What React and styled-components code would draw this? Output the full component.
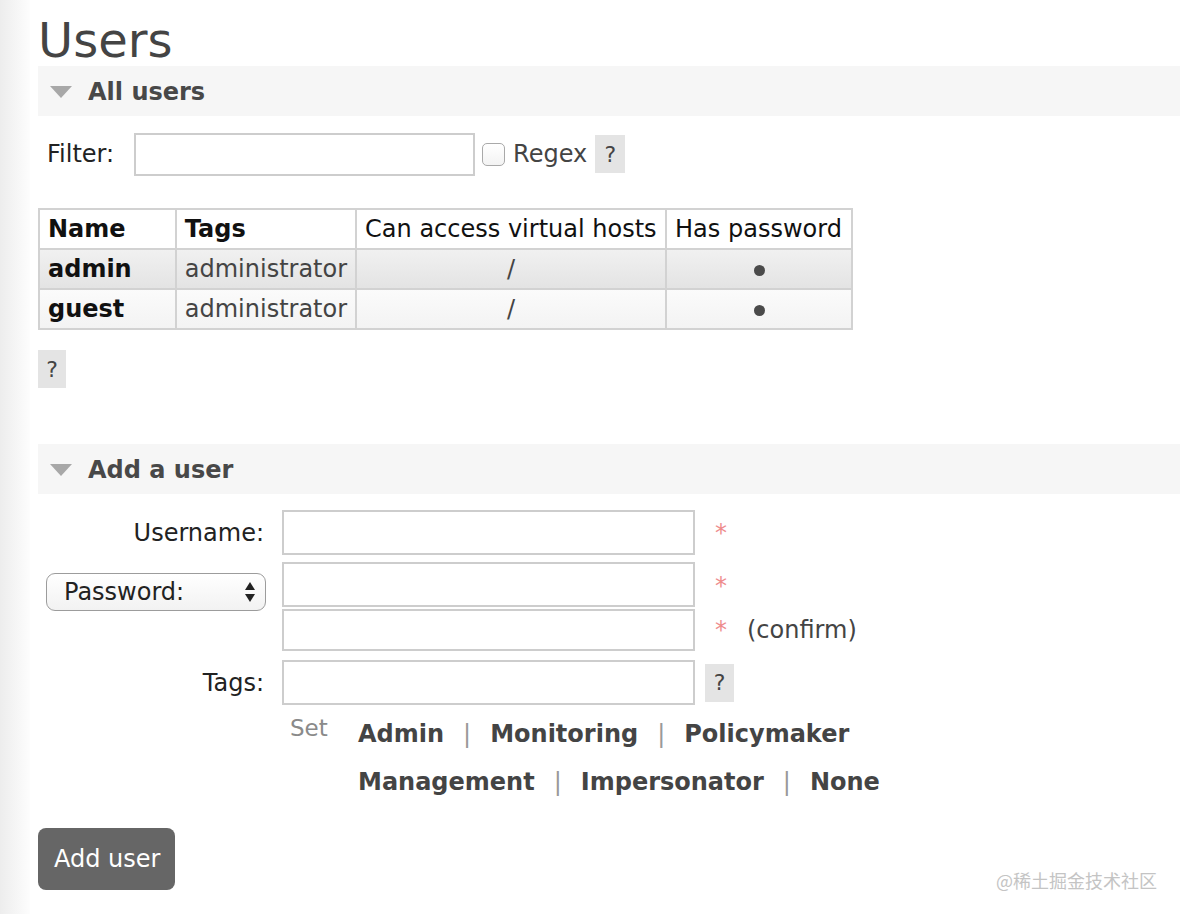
import React from "react";
import styled, { createGlobalStyle } from "styled-components";

const Global = createGlobalStyle`
  html, body { margin: 0; padding: 0; background: #fff; }
  body {
    font-family: "DejaVu Sans", Verdana, sans-serif;
    font-size: 24px;
    color: #222;
  }
  * { box-sizing: border-box; }
`;

const Page = styled.div`
  position: relative;
  display: flex;
  min-height: 914px;
  width: 1180px;
  overflow: hidden;
`;

const Rail = styled.div`
  flex: 0 0 30px;
  background: linear-gradient(to right, #ededed 0%, #f5f5f5 50%, #fdfdfd 100%);
`;

const Main = styled.main`
  flex: 1;
  padding-left: 8px;
`;

const Title = styled.h1`
  margin: 0 0 2px 0;
  padding-top: 16px;
  font-size: 48px;
  line-height: 48px;
  font-weight: normal;
  color: #444;
`;

const SectionHeader = styled.h2`
  display: flex;
  align-items: center;
  gap: 16px;
  height: 50px;
  margin: ${(p) => p.$top || 0}px 0 0 0;
  padding-left: 12px;
  padding-top: 2px;
  background: #f6f6f6;
  font-size: 24px;
  font-weight: bold;
  color: #484848;
`;

const Arrow = () => (
  <svg width="22" height="12" viewBox="0 0 22 12">
    <polygon points="0,0 22,0 11,12" fill="#a8a8a8" />
  </svg>
);

const FilterRow = styled.div`
  display: flex;
  align-items: center;
  margin-top: 16px;
  padding-left: 9px;
  height: 43px;
  padding-top: 1px;
  color: #222;
`;

const FilterLabel = styled.label`
  margin-right: 20px;
`;

const TextInput = styled.input`
  width: ${(p) => p.$w || 413}px;
  height: ${(p) => p.$h || 45}px;
  border: 2px solid #cdcdcd;
  background: #fff;
  margin: 0;
  padding: 0 8px;
  font: inherit;
  outline: none;
`;

const Checkbox = styled.input`
  appearance: none;
  width: 23px;
  height: 23px;
  margin: 0 8px 0 7px;
  border: 1px solid #a9a9a9;
  border-radius: 5px;
  background: linear-gradient(#fff, #f3f3f3);
`;

const CheckLabel = styled.span`
  color: #444;
`;

const Help = styled.span`
  display: inline-flex;
  align-items: center;
  justify-content: center;
  width: ${(p) => p.$w || 30}px;
  height: 38px;
  margin-left: ${(p) => p.$ml || 0}px;
  background: #e4e4e4;
  color: #444;
  font-size: 22px;
`;

const Table = styled.table`
  margin-top: 33px;
  border-collapse: collapse;
  border: 2px solid #d2d2d2;
  width: 815px;
`;

const Th = styled.th`
  height: 40px;
  padding: 0 8px;
  border: 2px solid #d2d2d2;
  text-align: left;
  font-weight: ${(p) => (p.$bold ? "bold" : "normal")};
  color: #111;
  background: #fff;
  white-space: nowrap;
`;

const Tr = styled.tr`
  background: ${(p) =>
    p.$alt
      ? "linear-gradient(#fbfbfb, #f3f3f3)"
      : "linear-gradient(#f1f1f1, #e3e3e3)"};
`;

const Td = styled.td`
  height: 40px;
  padding: 0 8px;
  border: 2px solid #d2d2d2;
  text-align: ${(p) => (p.$center ? "center" : "left")};
  font-weight: ${(p) => (p.$bold ? "bold" : "normal")};
  color: ${(p) => (p.$bold ? "#111" : "#444")};
  white-space: nowrap;
`;

const Dot = styled.span`
  display: inline-block;
  width: 11px;
  height: 11px;
  border-radius: 50%;
  background: #4a4a4a;
  vertical-align: middle;
`;

const HelpBlock = styled.div`
  margin-top: 20px;
`;

const Form = styled.div`
  margin-top: 16px;
`;

const FormRow = styled.div`
  display: grid;
  grid-template-columns: 244px 413px auto;
  align-items: ${(p) => (p.$start ? "start" : "center")};
  margin-top: ${(p) => p.$top || 0}px;
`;

const Label = styled.label`
  text-align: right;
  padding-right: 18px;
  color: #222;
`;

const SelectBox = styled.div`
  display: flex;
  align-items: center;
  justify-content: space-between;
  width: 220px;
  height: 38px;
  margin: ${(p) => p.$top || 0}px 0 0 8px;
  padding: 0 9px 0 17px;
  border: 1px solid #9c9c9c;
  border-radius: 9px;
  background: linear-gradient(#ffffff, #f2f2f2);
  color: #222;
`;

const UpDown = () => (
  <svg width="12" height="22" viewBox="0 0 12 22">
    <polygon points="6,1 11,9 1,9" fill="#222" />
    <polygon points="6,21 11,13 1,13" fill="#222" />
  </svg>
);

const Extras = styled.div`
  display: flex;
  align-items: center;
`;

const Required = styled.span`
  margin-left: 20px;
  color: #ee8c8c;
  font-size: 24px;
`;

const Confirm = styled.span`
  margin-left: 20px;
  color: #444;
`;

const InputStack = styled.div`
  display: flex;
  flex-direction: column;
  gap: 2px;
`;

const PwRow = styled.div`
  display: flex;
  align-items: center;
  height: ${(p) => p.$h}px;
`;

const SetRow = styled.div`
  display: flex;
  align-items: flex-start;
  margin: 5px 0 0 252px;
`;

const SetLabel = styled.span`
  width: 68px;
  color: #8a8a8a;
  font-size: 23px;
  line-height: 36px;
`;

const TagLines = styled.div`
  display: flex;
  flex-direction: column;
`;

const TagLine = styled.div`
  display: flex;
  align-items: center;
  height: 48px;
`;

const TagLink = styled.a`
  font-weight: bold;
  color: #444;
  text-decoration: none;
`;

const Sep = styled.span`
  margin: 0 19px;
  color: #999;
`;

const SubmitButton = styled.button`
  margin-top: 22px;
  height: 62px;
  padding: 0 15px 0 16px;
  border: none;
  border-radius: 8px;
  background: #666;
  color: #fff;
  font: inherit;
`;

const Watermark = styled.div`
  position: absolute;
  right: 23px;
  top: 867px;
  font-family: "Noto Sans CJK SC", sans-serif;
  font-size: 18px;
  color: #c4c4c4;
`;

const users = [
  { name: "admin", tags: "administrator", vhosts: "/" },
  { name: "guest", tags: "administrator", vhosts: "/" },
];

const tagLines = [
  ["Admin", "Monitoring", "Policymaker"],
  ["Management", "Impersonator", "None"],
];

export default function App() {
  return (
    <>
      <Global />
      <Page>
        <Rail />
        <Main>
          <Title>Users</Title>
          <SectionHeader>
            <Arrow />
            All users
          </SectionHeader>
          <FilterRow>
            <FilterLabel>Filter:</FilterLabel>
            <TextInput $w={341} $h={43} />
            <Checkbox type="checkbox" />
            <CheckLabel>Regex</CheckLabel>
            <Help $ml={8}>?</Help>
          </FilterRow>
          <Table>
            <thead>
              <tr>
                <Th $bold style={{ width: 139 }}>Name</Th>
                <Th $bold style={{ width: 180 }}>Tags</Th>
                <Th style={{ width: 310 }}>Can access virtual hosts</Th>
                <Th style={{ width: 186 }}>Has password</Th>
              </tr>
            </thead>
            <tbody>
              {users.map((u, i) => (
                <Tr key={u.name} $alt={i % 2 === 1}>
                  <Td $bold>{u.name}</Td>
                  <Td>{u.tags}</Td>
                  <Td $center>{u.vhosts}</Td>
                  <Td $center>
                    <Dot />
                  </Td>
                </Tr>
              ))}
            </tbody>
          </Table>
          <HelpBlock>
            <Help $w={28}>?</Help>
          </HelpBlock>

          <SectionHeader $top={56}>
            <Arrow />
            Add a user
          </SectionHeader>
          <Form>
            <FormRow>
              <Label>Username:</Label>
              <TextInput />
              <Extras>
                <Required>*</Required>
              </Extras>
            </FormRow>
            <FormRow $start $top={7}>
              <SelectBox $top={11}>
                Password:
                <UpDown />
              </SelectBox>
              <InputStack>
                <TextInput type="password" />
                <TextInput type="password" $h={42} />
              </InputStack>
              <Extras style={{ flexDirection: "column", alignItems: "flex-start" }}>
                <PwRow $h={47}>
                  <Required>*</Required>
                </PwRow>
                <PwRow $h={42}>
                  <Required>*</Required>
                  <Confirm>(confirm)</Confirm>
                </PwRow>
              </Extras>
            </FormRow>
            <FormRow $top={9}>
              <Label>Tags:</Label>
              <TextInput />
              <Extras>
                <Help $w={29} $ml={10}>?</Help>
              </Extras>
            </FormRow>
            <SetRow>
              <SetLabel>Set</SetLabel>
              <TagLines>
                {tagLines.map((line, li) => (
                  <TagLine key={li}>
                    {line.map((t, i) => (
                      <React.Fragment key={t}>
                        {i > 0 && <Sep>|</Sep>}
                        <TagLink href="#">{t}</TagLink>
                      </React.Fragment>
                    ))}
                  </TagLine>
                ))}
              </TagLines>
            </SetRow>
          </Form>
          <SubmitButton>Add user</SubmitButton>
        </Main>
        <Watermark>@稀土掘金技术社区</Watermark>
      </Page>
    </>
  );
}
